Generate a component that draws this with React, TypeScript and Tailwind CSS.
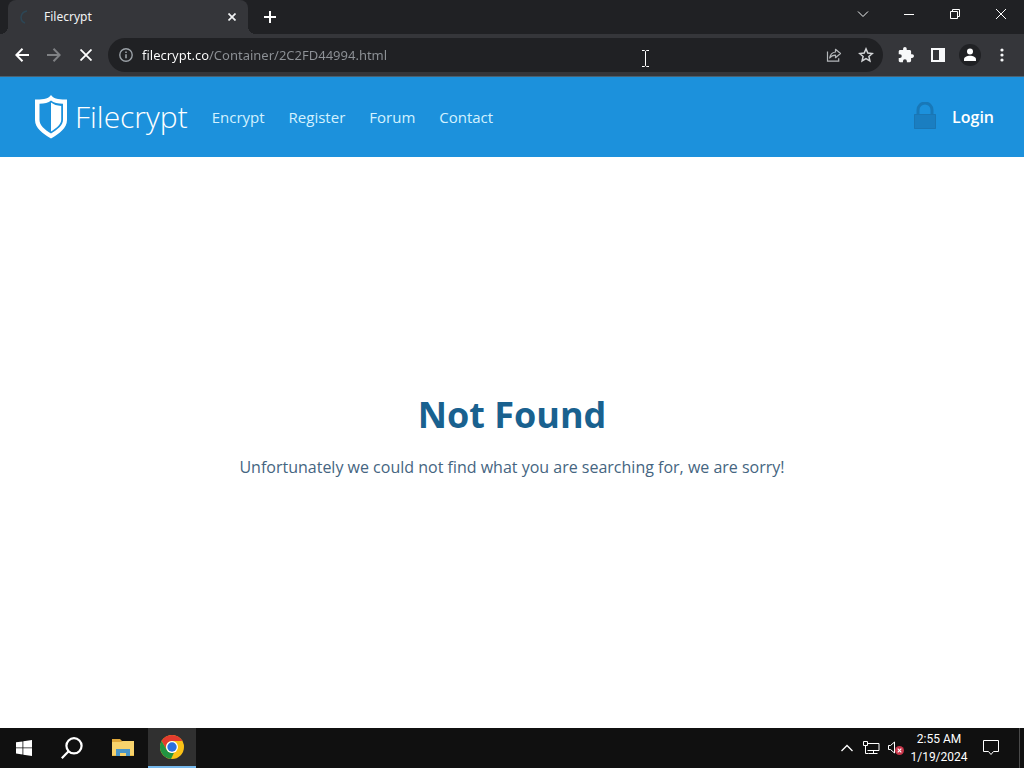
import type { ReactNode } from "react";

interface IconButtonProps {
  label: string;
  className?: string;
  children: ReactNode;
}

function IconButton({ label, className = "w-8", children }: IconButtonProps) {
  return (
    <button
      type="button"
      aria-label={label}
      className={`flex h-full shrink-0 items-center justify-center ${className}`}
    >
      {children}
    </button>
  );
}

const navLinks = ["Encrypt", "Register", "Forum", "Contact"];

function TitleBar() {
  return (
    <div className="flex h-[34px] items-stretch bg-[#202124]">
      {/* Active tab with its curved feet */}
      <span className="size-2 shrink-0 self-end bg-[radial-gradient(circle_at_0_0,#202124_8px,#35363a_8px)]" />
      <div className="flex w-60 shrink-0 items-center rounded-t-lg bg-[#35363a] pr-2 pl-3">
        <svg width="16" height="16" viewBox="0 0 16 16" fill="none" aria-hidden="true">
          <path d="M7 2C-.5 3.500-.5 12 5 14" stroke="#2d4655" strokeWidth="1.500" />
        </svg>
        <span className="ml-2 flex-1 text-xs text-[#f1f3f4]">Filecrypt</span>
        <button type="button" aria-label="Close tab" className="flex size-4 items-center justify-center">
          <svg width="8" height="8" viewBox="0 0 8 8" stroke="#f1f3f4" strokeWidth="1.700">
            <path d="M.5.5l7 7M7.500.5l-7 7" />
          </svg>
        </button>
      </div>
      <span className="size-2 shrink-0 self-end bg-[radial-gradient(circle_at_100%_0,#202124_8px,#35363a_8px)]" />
      <IconButton label="New tab" className="w-7">
        <svg width="12" height="12" viewBox="0 0 12 12" stroke="#fff" strokeWidth="2">
          <path d="M6 0v12M0 6h12" />
        </svg>
      </IconButton>

      {/* Window controls */}
      <div className="ml-auto flex h-7">
        <IconButton label="Search tabs" className="w-[46px]">
          <svg width="12" height="12" viewBox="0 0 12 12" fill="none" stroke="#f1f3f4">
            <path d="M1 3.5l5 5 5-5" />
          </svg>
        </IconButton>
        <IconButton label="Minimize" className="w-[46px]">
          <svg width="10" height="10" viewBox="0 0 10 10" stroke="#fff">
            <path d="M0 5.5h10" />
          </svg>
        </IconButton>
        <IconButton label="Restore" className="w-[46px]">
          <svg width="10" height="10" viewBox="0 0 10 10" fill="none" stroke="#fff">
            <path d="M.5 2.5h7v7h-7zM2.5 2.5v-2h7v7h-2" />
          </svg>
        </IconButton>
        <IconButton label="Close" className="w-[46px]">
          <svg width="10" height="10" viewBox="0 0 10 10" stroke="#fff">
            <path d="M0 0l10 10M10 0L0 10" />
          </svg>
        </IconButton>
      </div>
    </div>
  );
}

function Toolbar() {
  return (
    <div className="flex h-[43px] items-center border-b border-[#4b6272] bg-[#35363a] px-[6px]">
      <IconButton label="Back">
        <svg width="14" height="14" viewBox="0 0 14 14" fill="none" stroke="#fff" strokeWidth="2">
          <path d="M14 7H1.5M7.5 .8L1.3 7l6.2 6.2" />
        </svg>
      </IconButton>
      <IconButton label="Forward">
        <svg width="14" height="14" viewBox="0 0 14 14" fill="none" stroke="#7f8184" strokeWidth="2">
          <path d="M0 7h12.5M6.5 .8L12.7 7l-6.2 6.2" />
        </svg>
      </IconButton>
      <IconButton label="Stop loading">
        <svg width="12" height="12" viewBox="0 0 12 12" stroke="#fff" strokeWidth="1.8">
          <path d="M.5.5l11 11M11.5.5l-11 11" />
        </svg>
      </IconButton>

      <div className="relative mr-[7px] ml-[6px] flex h-[34px] min-w-0 flex-1 items-center rounded-full bg-[#202124] pr-px pl-[2px]">
        <IconButton label="Site information">
          <svg width="14" height="14" viewBox="0 0 14 14" fill="none" stroke="#9aa0a6" strokeWidth="1.4">
            <circle cx="7" cy="7" r="6.2" />
            <path d="M7 6.2v4M7 3.4v1.6" strokeWidth="1.6" />
          </svg>
        </IconButton>
        {/* Host is brighter than the path */}
        <input
          type="text"
          aria-label="Address"
          defaultValue="filecrypt.co/Container/2C2FD44994.html"
          className="h-full min-w-0 flex-1 bg-[linear-gradient(90deg,#ffffff_67px,#8e9297_67px)] bg-clip-text text-[13px] text-transparent outline-none"
        />
        <IconButton label="Share this page">
          <svg width="16" height="16" viewBox="0 0 16 16" fill="none" stroke="#b4b7ba" strokeWidth="1.2">
            <path d="M1.5 4.5v9.700h11.200v-3" />
            <path d="M9.5 5V2.300l5 4.200-5 4.200V8.200C7 8.200 5 9 3.700 11 4.100 7.800 6 5.400 9.500 5z" strokeLinejoin="round" />
          </svg>
        </IconButton>
        <IconButton label="Bookmark this tab">
          <svg width="16" height="16" viewBox="0 0 16 16" fill="none" stroke="#d2d4d6" strokeWidth="1.5">
            <path d="M8 1.900l1.800 4.200 4.500.4-3.400 3 1 4.400L8 11.600l-3.900 2.300 1-4.400-3.400-3 4.500-.4z" />
          </svg>
        </IconButton>
        {/* Text cursor */}
        <svg
          className="absolute top-3 left-[533px]"
          width="9"
          height="17"
          viewBox="0 0 9 17"
          fill="none"
          stroke="#fff"
          aria-hidden="true"
        >
          <path d="M1 .5h2.500l1 1 1-1H8M4.500 1.500v14M1 16.500h2.500l1-1 1 1H8" />
        </svg>
      </div>

      <IconButton label="Extensions">
        <svg width="16" height="16" viewBox="1 1 22 22" fill="#f8f9fa">
          <path d="M20.500 11H19V7c0-1.100-.9-2-2-2h-4V3.500a2.500 2.500 0 0 0-5 0V5H4c-1.100 0-2 .9-2 2v3.800h1.500a2.700 2.700 0 0 1 0 5.400H2V20c0 1.100.9 2 2 2h3.800v-1.500a2.700 2.700 0 0 1 5.400 0V22H17c1.100 0 2-.9 2-2v-4h1.500a2.500 2.500 0 0 0 0-5z" />
        </svg>
      </IconButton>
      <IconButton label="Side panel">
        <svg width="14" height="14" viewBox="0 0 14 14" fill="#f8f9fa" fillRule="evenodd">
          <path d="M0 0h14v14H0zM2 2v10h6V2z" />
        </svg>
      </IconButton>
      <IconButton label="Profile">
        <svg width="22" height="22" viewBox="0 0 22 22">
          <circle cx="11" cy="11" r="11" fill="#202124" />
          <circle cx="11" cy="7.5" r="3" fill="#fff" />
          <path d="M5 17v-1.500c0-2.400 3-3.700 6-3.700s6 1.300 6 3.700V17z" fill="#fff" />
        </svg>
      </IconButton>
      <IconButton label="Menu">
        <svg width="4" height="14" viewBox="0 0 4 14" fill="#f8f9fa">
          <circle cx="2" cy="2" r="1.6" />
          <circle cx="2" cy="7" r="1.6" />
          <circle cx="2" cy="12" r="1.6" />
        </svg>
      </IconButton>
    </div>
  );
}

function SiteHeader() {
  return (
    <header className="flex h-20 items-center bg-[#1c91dc] pr-[30px] pl-[34px] font-['Open_Sans',sans-serif]">
      <a href="#home" className="flex items-center gap-[7px] text-white">
        <svg width="34" height="44" viewBox="0 0 34 44" fill="#fff" fillRule="evenodd" aria-hidden="true">
          <path d="M17 0c1.500 2.200 4 3.600 7 4.100 3 .5 6 .4 9 .5v20.400c0 8-8 14-16 18.500C9 39 1 33 1 25V4.600c3-.1 6 0 9-.5 3-.5 5.500-1.900 7-4.100zM17 5.500c-2.500 2.200-6.500 3.200-11.500 3.300V25c0 5 5 9.500 11.500 13.500C23.500 34.500 29 30 29 25V8.800C24 8.700 19.500 7.700 17 5.500z" />
          <path d="M17 7.600c2.500 2 6 3.200 10.200 3.400V25c0 4.300-4.500 8-10.200 11.500z" />
        </svg>
        <span className="text-3xl leading-10 font-light">Filecrypt</span>
      </a>
      <nav className="ml-6 flex gap-6 text-[15px] text-[#d3f1ff]">
        {navLinks.map((link) => (
          <a key={link} href={`#${link.toLowerCase()}`}>
            {link}
          </a>
        ))}
      </nav>
      <a href="#login" className="ml-auto flex items-center gap-4 text-base font-semibold text-white">
        <svg width="22" height="30" viewBox="0 0 22 30" fill="none" aria-hidden="true">
          <path d="M4 13V8a7 7 0 0 1 14 0v5" stroke="#1878b8" strokeWidth="3" />
          <rect y="12" width="22" height="15" rx="1" fill="#1a7ec1" />
          <path d="M.5 12.500h21v14H.5z" stroke="#1a76b4" />
        </svg>
        Login
      </a>
    </header>
  );
}

function ChromeIcon() {
  return (
    <svg width="24" height="24" viewBox="0 0 24 24" aria-hidden="true">
      <circle cx="12" cy="12" r="12" fill="#fbc116" />
      <path d="M12 0a12 12 0 0 1 10.400 6H12a6 6 0 0 0-5.200 9L1.600 6A12 12 0 0 1 12 0z" fill="#e33b2e" />
      <path d="M1.600 6l5.200 9A6 6 0 0 0 14 17.650L11 24A12 12 0 0 1 1.600 6z" fill="#229342" />
      <circle cx="12" cy="12" r="6" fill="#fff" />
      <circle cx="12" cy="12" r="4.7" fill="#2b6fe0" />
    </svg>
  );
}

function Taskbar() {
  return (
    <footer className="flex h-10 items-stretch bg-[#101010] text-white">
      <IconButton label="Start" className="w-12">
        <svg width="16" height="16" viewBox="0 0 16 16" fill="#fff">
          <path d="M0 2.300l6.500-.9v6.100H0zM7.300 1.300L16 0v7.500H7.300zM0 8.300h6.500v6.200L0 13.600zM7.300 8.300H16V16l-8.700-1.300z" />
        </svg>
      </IconButton>
      <IconButton label="Search" className="w-12">
        <svg width="22" height="22" viewBox="0 0 22 22" fill="none" stroke="#fff" strokeWidth="2.2">
          <circle cx="13" cy="8.8" r="7.6" />
          <path d="M7.600 14.200L.8 21.200" />
        </svg>
      </IconButton>
      <IconButton label="File Explorer" className="ml-[3px] w-12">
        <svg width="22" height="18" viewBox="0 0 22 18">
          <path d="M0 0h8l2 2h12v4H0z" fill="#e0a83a" />
          <path d="M0 3h9l2-1h11v15H0z" fill="#f8d36c" />
          <path d="M4 10h14v7h-4v-3H8v3H4z" fill="#4a96c8" />
          <path d="M0 16h4v1H0zM18 16h4v1h-4z" fill="#e9bb45" />
        </svg>
      </IconButton>
      <IconButton label="Google Chrome" className="ml-px w-12 border-b-2 border-[#76b9ed] bg-[#303030]">
        <ChromeIcon />
      </IconButton>

      {/* Tray */}
      <div className="ml-auto flex items-stretch">
        <IconButton label="Show hidden icons" className="w-6">
          <svg width="12" height="8" viewBox="0 0 12 8" fill="none" stroke="#fff" strokeWidth="1.3">
            <path d="M.5 7L6 1.500 11.500 7" />
          </svg>
        </IconButton>
        <IconButton label="Network" className="w-6">
          <svg width="17" height="14" viewBox="0 0 17 14" fill="none" stroke="#fff">
            <path d="M4.500 2.500h11.500v7H4.500M.5.500h4v4h-4zM2.500 4.500v8M10.500 9.500v3M5.500 12.500h9M2.500 12.500h3" />
          </svg>
        </IconButton>
        <IconButton label="Volume muted" className="w-6">
          <svg width="17" height="14" viewBox="0 0 17 14" fill="none">
            <path d="M1.500 4.500h2l4-3.500v11l-4-3.500h-2z" stroke="#fff" />
            <circle cx="12.5" cy="9.5" r="4.5" fill="#c9364a" />
            <path d="M10.700 7.700l3.600 3.600M14.300 7.700l-3.600 3.600" stroke="#fff" strokeWidth="1.1" />
          </svg>
        </IconButton>
        <button
          type="button"
          className="w-16 text-center font-['Roboto',sans-serif] text-xs leading-[18px] whitespace-nowrap"
        >
          <span className="block">2:55 AM</span>
          <span className="block">1/19/2024</span>
        </button>
        <IconButton label="Notifications" className="w-10">
          <svg width="16" height="16" viewBox="0 0 16 16" fill="none" stroke="#fff">
            <path d="M.5.5h15v11h-5L8 14.500 5.500 11.500h-5z" />
          </svg>
        </IconButton>
        <IconButton label="Show desktop" className="ml-2 w-[5px] border-l border-[#4a4a4a]">
          <span />
        </IconButton>
      </div>
    </footer>
  );
}

export default function App() {
  return (
    <div className="flex min-h-screen flex-col bg-white font-['Noto_Sans','Open_Sans',sans-serif]">
      <TitleBar />
      <Toolbar />
      <SiteHeader />
      <main className="flex flex-1 flex-col items-center justify-center px-6 pb-4 text-center font-['Open_Sans',sans-serif]">
        <h1 className="text-4xl leading-[48px] font-bold text-[#19618f]">Not Found</h1>
        <p className="mt-4 text-base text-[#456581]">
          Unfortunately we could not find what you are searching for, we are sorry!
        </p>
      </main>
      <Taskbar />
    </div>
  );
}
